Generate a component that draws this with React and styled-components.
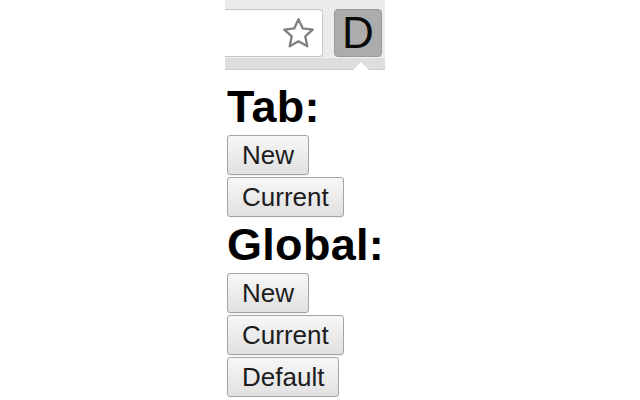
import React from "react";
import styled, { createGlobalStyle } from "styled-components";

const Global = createGlobalStyle`
  html, body { margin: 0; padding: 0; background: #ffffff; }
  body { font-family: "Liberation Sans", Arial, sans-serif; }
`;

const Popup = styled.div`
  margin-left: 225px;
  width: 160px;
  overflow: hidden;
`;

const Toolbar = styled.div`
  position: relative;
  height: 70px;
  background: #ebebeb;
  border-bottom: 1px solid #d0d0d0;
  box-sizing: border-box;
`;

const ToolRow = styled.div`
  display: flex;
  align-items: flex-start;
  padding-top: 9px;
  height: 48px;
  gap: 11px;
`;

const Omnibox = styled.div`
  width: 98px;
  height: 48px;
  box-sizing: border-box;
  background: #ffffff;
  border: 1px solid #c4c4c4;
  border-left: none;
  border-radius: 0 4px 4px 0;
  display: flex;
  align-items: center;
  justify-content: flex-end;
  padding-right: 5px;
`;

const ActionButton = styled.div`
  width: 48px;
  height: 48px;
  box-sizing: border-box;
  background: #acacac;
  border: 1px solid #9a9a9a;
  border-radius: 4px;
  display: flex;
  align-items: center;
  justify-content: center;
  font-size: 44px;
  line-height: 1;
  color: #0a0a0a;
`;

const Shelf = styled.div`
  height: 12px;
  background: #dedede;
  border-top: 1px solid #f2f2f2;
  box-sizing: border-box;
`;

const Notch = styled.div`
  position: absolute;
  left: 128px;
  bottom: -1px;
  width: 0;
  height: 0;
  border-left: 8px solid transparent;
  border-right: 8px solid transparent;
  border-bottom: 8px solid #ffffff;
`;

const Content = styled.div`
  padding: 11px 0 0 2px;
  display: flex;
  flex-direction: column;
  align-items: flex-start;
`;

const Heading = styled.h1`
  margin: 0 0 2px;
  font-family: "Liberation Sans", Arial, sans-serif;
  font-weight: bold;
  font-size: 45px;
  letter-spacing: 0.3px;
  line-height: 52px;
  color: #000000;
`;

const ButtonStack = styled.div`
  display: flex;
  flex-direction: column;
  align-items: flex-start;
  gap: 2px;
  margin-bottom: ${(p) => p.$after || 0}px;
`;

const Button = styled.button`
  height: 40px;
  padding: 0 14px;
  font-family: "Liberation Sans", Arial, sans-serif;
  font-size: 26px;
  color: #1c1c1c;
  background: linear-gradient(#f7f7f7, #e0e0e0);
  border: 1px solid #a4a4a4;
  border-radius: 3px;
  box-shadow: 0 1px 0 rgba(0, 0, 0, 0.06);
`;

const Star = () => (
  <svg width="37" height="37" viewBox="0 0 24 24">
    <path
      d="M12 2.8l2.75 5.9 6.45.75-4.8 4.45 1.3 6.4L12 17.1l-5.7 3.2 1.3-6.4-4.8-4.45 6.45-.75z"
      fill="#ffffff"
      stroke="#808080"
      strokeWidth="1.5"
      strokeLinejoin="round"
    />
  </svg>
);

export default function App() {
  return (
    <>
      <Global />
      <Popup>
        <Toolbar>
          <ToolRow>
            <Omnibox>
              <Star />
            </Omnibox>
            <ActionButton>D</ActionButton>
          </ToolRow>
          <Shelf />
          <Notch />
        </Toolbar>
        <Content>
          <Heading>Tab:</Heading>
          <ButtonStack $after={2}>
            <Button>New</Button>
            <Button>Current</Button>
          </ButtonStack>
          <Heading>Global:</Heading>
          <ButtonStack>
            <Button>New</Button>
            <Button>Current</Button>
            <Button>Default</Button>
          </ButtonStack>
        </Content>
      </Popup>
    </>
  );
}
